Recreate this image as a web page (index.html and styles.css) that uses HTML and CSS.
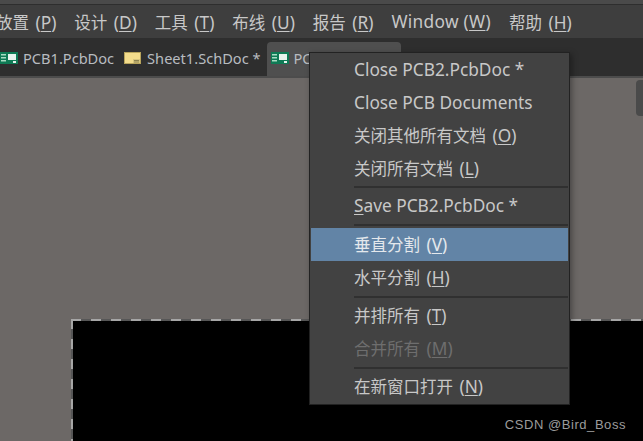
FILE: index.html
```html
<!DOCTYPE html>
<html lang="en">
<head>
  <meta charset="UTF-8" />
  <meta name="viewport" content="width=device-width, initial-scale=1.0" />
  <title>PCB2.PcbDoc</title>
  <link rel="stylesheet" href="styles.css">
</head>
<body>
  <div class="top-strip"></div>
  <nav class="menu-bar">
    <span class="menu-title"><span class="zh">放置</span> (<u>P</u>)</span>
    <span class="menu-title"><span class="zh">设计</span> (<u>D</u>)</span>
    <span class="menu-title"><span class="zh">工具</span> (<u>T</u>)</span>
    <span class="menu-title"><span class="zh">布线</span> (<u>U</u>)</span>
    <span class="menu-title"><span class="zh">报告</span> (<u>R</u>)</span>
    <span class="menu-title menu-title-wide">Window (<u>W</u>)</span>
    <span class="menu-title"><span class="zh">帮助</span> (<u>H</u>)</span>
  </nav>
  <div class="tab-bar">
    <div class="tab">
      <svg class="doc-icon" viewBox="0 0 18 14"><use href="#pcb-icon" /></svg>
      <span>PCB1.PcbDoc</span>
    </div>
    <div class="tab">
      <svg class="doc-icon" viewBox="0 0 18 14">
        <rect x="0.5" y="1.5" width="16" height="11" fill="#f3dc8c" stroke="#b8a45c" />
        <rect x="9" y="8" width="7" height="4" fill="#d8c67e" />
        <path d="M10 9.5h5M10 11h5" stroke="#8d8250" />
      </svg>
      <span>Sheet1.SchDoc *</span>
    </div>
    <div class="tab tab-active">
      <svg class="doc-icon" viewBox="0 0 18 14"><use href="#pcb-icon" /></svg>
      <span>PCB2.PcbDoc *</span>
    </div>
  </div>
  <main class="canvas">
    <div class="scroll-handle"></div>
    <div class="board"></div>
    <div class="watermark">CSDN @Bird_Boss</div>
  </main>

  <ul class="context-menu">
    <li class="item">Close PCB2.PcbDoc *</li>
    <li class="item">Close PCB Documents</li>
    <li class="item"><span class="zh">关闭其他所有文档</span> (<u>O</u>)</li>
    <li class="item"><span class="zh">关闭所有文档</span> (<u>L</u>)</li>
    <li class="sep sep-tight"></li>
    <li class="item"><u>S</u>ave PCB2.PcbDoc *</li>
    <li class="sep sep-wide"></li>
    <li class="item active"><span class="zh">垂直分割</span> (<u>V</u>)</li>
    <li class="item"><span class="zh">水平分割</span> (<u>H</u>)</li>
    <li class="sep"></li>
    <li class="item"><span class="zh">并排所有</span> (<u>T</u>)</li>
    <li class="item disabled"><span class="zh">合并所有</span> (<u>M</u>)</li>
    <li class="sep"></li>
    <li class="item"><span class="zh">在新窗口打开</span> (<u>N</u>)</li>
  </ul>

  <svg class="defs" width="0" height="0">
    <symbol id="pcb-icon" viewBox="0 0 18 14">
      <rect x="0" y="1" width="18" height="12" fill="#0f7a55" />
      <rect x="1" y="3" width="5" height="1.5" fill="#a9dcc4" />
      <rect x="1" y="6" width="5" height="1.5" fill="#a9dcc4" />
      <rect x="1" y="9" width="5" height="1.5" fill="#a9dcc4" />
      <rect x="8" y="3" width="8" height="6" fill="#e8f4ee" />
      <rect x="13" y="10" width="3" height="2" fill="#e8f4ee" />
    </symbol>
  </svg>
</body>
</html>
```

FILE: styles.css
```css
* {
  box-sizing: border-box;
}
html, body {
  height: 100%;
}
body {
  margin: 0;
  display: flex;
  flex-direction: column;
  overflow: hidden;
  background: #6c6866;
  color: #c8c8c8;
  font-family: "Noto Sans", "Noto Sans CJK SC", sans-serif;
  font-size: 17.3px;
}
u {
  text-underline-offset: 2px;
}
.zh {
  font-size: 16.5px;
  margin-right: 2px;
}
.top-strip {
  height: 5px;
  background: #4a4a4a;
  border-bottom: 1px solid #2e2e2e;
}
.menu-bar {
  height: 33px;
  flex: none;
  display: flex;
  align-items: center;
  gap: 18px;
  margin-left: -4px;
  background: #3e3e3e;
  white-space: nowrap;
}
.menu-title-wide {
  letter-spacing: 0.3px;
}
.tab-bar {
  height: 40px;
  flex: none;
  display: flex;
  align-items: flex-end;
  background: #2e2e2e;
  border-bottom: 2px solid #4c4c4c;
  font-size: 14.6px;
  white-space: nowrap;
}
.tab {
  height: 34px;
  display: flex;
  align-items: center;
  gap: 5px;
  padding: 0 6px 2px 0;
  color: #b8bcc0;
}
.tab + .tab {
  padding-left: 4px;
}
.tab-active {
  width: 134px;
  padding-left: 5px;
  overflow: hidden;
  background: #4f4f4f;
  border-radius: 4px 4px 0 0;
}
.doc-icon {
  width: 18px;
  height: 14px;
  flex: none;
}
.canvas {
  flex: 1;
  position: relative;
  background: #6c6866;
}
.scroll-handle {
  position: absolute;
  top: 2px;
  right: 0;
  width: 7px;
  height: 36px;
  background: #4a4a4a;
  border-radius: 4px 0 0 4px;
}
.board {
  position: absolute;
  left: 71px;
  top: 241px;
  right: 0;
  bottom: 0;
  background:
    repeating-linear-gradient(to right, #a6a6a6 0 10px, #565656 10px 20px) top left / 100% 2px no-repeat,
    repeating-linear-gradient(to bottom, #a6a6a6 0 10px, #565656 10px 20px) top left / 2px 100% no-repeat,
    #000;
}
.watermark {
  position: absolute;
  right: 17px;
  bottom: 9px;
  font-family: "Liberation Sans", sans-serif;
  font-size: 13px;
  letter-spacing: 0.55px;
  color: #9c9c9c;
}
.context-menu {
  position: absolute;
  left: 309px;
  top: 52px;
  width: 261px;
  height: 353px;
  margin: 0;
  padding: 0 1px;
  list-style: none;
  background: #424242;
  border: 1px solid #222;
  box-shadow: 2px 2px 6px rgba(0, 0, 0, 0.35);
  white-space: nowrap;
}
.item {
  height: 33px;
  line-height: 33px;
  padding-left: 43px;
  color: #c8c8c8;
}
.sep {
  height: 2px;
  margin: 2px 0 1px 43px;
  background: #303030;
}
.sep-tight {
  margin: 1px 0 1px 43px;
}
.sep-wide {
  margin: 2px 0 2px 43px;
}
.active {
  background: #6284a6;
  color: #e4e8ec;
}
.disabled {
  color: #6e6e6e;
}
.defs {
  position: absolute;
}
```
